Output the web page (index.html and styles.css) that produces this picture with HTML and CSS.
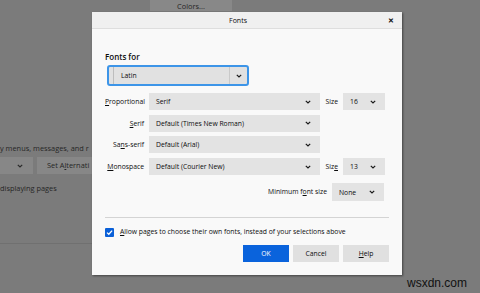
FILE: index.html
```html
<!DOCTYPE html>
<html lang="en">
<head>
    <title>Fonts</title>
    <meta charset="UTF-8">
    <link rel="stylesheet" href="styles.css">
</head>
<body>
    <!-- page behind the modal -->
    <div class="page">
        <div class="bg-colors">Colors...</div>
        <p class="bg-text bg-lang">y menus, messages, and r</p>
        <div class="bg-row">
            <div class="bg-select">
                <svg class="chev" width="6" height="4" viewBox="0 0 6 4"><path d="M0.8 0.8 L3 3 L5.2 0.8" /></svg>
            </div>
            <div class="bg-button">Set A<u>l</u>ternati</div>
        </div>
        <p class="bg-text bg-display">displaying pages</p>
        <div class="bg-line"></div>
    </div>

    <div class="dialog">
        <div class="titlebar">
            <span class="title">Fonts</span>
            <span class="close">&#x2715;</span>
        </div>
        <div class="dialog-body">
            <div class="heading">Fonts for</div>
            <div class="lang-select">
                <span class="lang-value">Latin</span>
                <span class="lang-arrow">
                    <svg class="chev" width="6" height="4" viewBox="0 0 6 4"><path d="M0.8 0.8 L3 3 L5.2 0.8" /></svg>
                </span>
            </div>

            <div class="font-grid">
                <div class="label"><u>P</u>roportional</div>
                <div class="select"><span>Serif</span><svg class="chev" width="6" height="4" viewBox="0 0 6 4"><path d="M0.8 0.8 L3 3 L5.2 0.8" /></svg></div>
                <div class="label">Size</div>
                <div class="select"><span>16</span><svg class="chev" width="6" height="4" viewBox="0 0 6 4"><path d="M0.8 0.8 L3 3 L5.2 0.8" /></svg></div>

                <div class="label"><u>S</u>erif</div>
                <div class="select"><span>Default (Times New Roman)</span><svg class="chev" width="6" height="4" viewBox="0 0 6 4"><path d="M0.8 0.8 L3 3 L5.2 0.8" /></svg></div>
                <div></div><div></div>

                <div class="label">Sa<u>n</u>s-serif</div>
                <div class="select"><span>Default (Arial)</span><svg class="chev" width="6" height="4" viewBox="0 0 6 4"><path d="M0.8 0.8 L3 3 L5.2 0.8" /></svg></div>
                <div></div><div></div>

                <div class="label"><u>M</u>onospace</div>
                <div class="select"><span>Default (Courier New)</span><svg class="chev" width="6" height="4" viewBox="0 0 6 4"><path d="M0.8 0.8 L3 3 L5.2 0.8" /></svg></div>
                <div class="label">Siz<u>e</u></div>
                <div class="select"><span>13</span><svg class="chev" width="6" height="4" viewBox="0 0 6 4"><path d="M0.8 0.8 L3 3 L5.2 0.8" /></svg></div>
            </div>

            <div class="min-row">
                <div class="label">Minimum f<u>o</u>nt size</div>
                <div class="select min-select"><span>None</span><svg class="chev" width="6" height="4" viewBox="0 0 6 4"><path d="M0.8 0.8 L3 3 L5.2 0.8" /></svg></div>
            </div>

            <div class="separator"></div>

            <div class="check-row">
                <span class="checkbox">
                    <svg width="9" height="9" viewBox="0 0 9 9"><path d="M2 4.6 L3.8 6.3 L7.1 2.6" /></svg>
                </span>
                <span><u>A</u>llow pages to choose their own fonts, instead of your selections above</span>
            </div>

            <div class="buttons">
                <div class="btn primary">OK</div>
                <div class="btn">Cancel</div>
                <div class="btn"><u>H</u>elp</div>
            </div>
        </div>
    </div>

    <div class="mark">wsxdn.com</div>
</body>
</html>
```

FILE: styles.css
```css
body {
    margin: 0;
    width: 480px;
    height: 293px;
    overflow: hidden;
    position: relative;
    background-color: #7b7b7b;
    font-family: "Open Sans", "Noto Sans", sans-serif;
    font-size: 6.8px;
    color: #0c0c0d;
}

u {
    text-decoration-thickness: 0.5px;
    text-underline-offset: 1px;
}

/****** PAGE BEHIND THE MODAL ******/
.page {
    color: #262626;
    width: 92px;
}
.bg-colors {
    margin-left: 150px;
    margin-top: -6px;
    width: 82px;
    height: 17px;
    line-height: 25px;
    text-align: center;
    background-color: #888888;
    font-size: 7.4px;
}
.bg-text {
    margin: 0;
    line-height: 10px;
    font-size: 7.4px;
    white-space: nowrap;
    overflow: hidden;
}
.bg-lang {
    margin-top: 132px;
}
.bg-row {
    display: flex;
    gap: 4px;
    margin-top: 4px;
    height: 17px;
}
.bg-select {
    width: 33px;
    flex-shrink: 0;
    background-color: #878787;
    display: flex;
    align-items: center;
    padding-left: 17px;
    box-sizing: border-box;
}
.bg-select .chev {
    stroke: #2a2a2a;
}
.bg-button {
    flex: 1;
    background-color: #878787;
    line-height: 17px;
    padding-left: 10px;
    font-size: 7.4px;
    white-space: nowrap;
    overflow: hidden;
}
.bg-display {
    margin-top: 9px;
}
.bg-line {
    margin-top: 50px;
    width: 92px;
    height: 1px;
    background-color: #707070;
}

/****** MODAL ******/
.dialog {
    position: absolute;
    left: 92px;
    top: 12px;
    width: 310px;
    height: 263px;
    background-color: #f9f9f9;
    box-shadow: 1px 1px 2px rgba(0, 0, 0, 0.45);
}
.titlebar {
    position: relative;
    height: 16px;
    background-color: #f0f0f0;
    border-bottom: 1px solid #dedede;
    text-align: center;
    line-height: 17px;
    font-size: 7px;
}
.title {
    display: inline-block;
    margin-right: 18px;
}
.close {
    position: absolute;
    right: 8px;
    top: 0;
    font-size: 7px;
    font-weight: 700;
}
.dialog-body {
    padding: 22px 13px 0 13px;
}
.heading {
    font-size: 8px;
    font-weight: 600;
    line-height: 12px;
}
.lang-select {
    display: flex;
    margin-top: 2px;
    margin-left: 2px;
    width: 142px;
    height: 21px;
    box-sizing: border-box;
    border: 2px solid #3d95e8;
    border-radius: 3px;
    background-color: #e1e1e1;
}
.lang-value {
    flex: 1;
    line-height: 17px;
    padding-left: 7px;
    border-left: 1px solid #bdbdbd;
    margin-left: 4px;
}
.lang-arrow {
    width: 17px;
    display: flex;
    align-items: center;
    justify-content: center;
    border-left: 1px solid #c9c9c9;
}

.chev {
    display: block;
    fill: none;
    stroke: #1a1a1a;
    stroke-width: 1.2;
}

.font-grid {
    display: grid;
    grid-template-columns: 39px 171px 13px 42px;
    grid-auto-rows: 17px;
    column-gap: 5px;
    row-gap: 4.7px;
    margin-top: 7px;
}
.label {
    text-align: right;
    line-height: 17px;
    white-space: nowrap;
}
.select {
    display: flex;
    align-items: center;
    justify-content: space-between;
    background-color: #e3e3e3;
    padding: 0 9px 0 7px;
    line-height: 17px;
}

.min-row {
    display: flex;
    justify-content: flex-end;
    gap: 5px;
    margin-top: 8px;
    padding-right: 5px;
    height: 18px;
}
.min-select {
    width: 52px;
    box-sizing: border-box;
}

.separator {
    margin-top: 16px;
    height: 1px;
    background-color: #d4d4d4;
}

.check-row {
    display: flex;
    align-items: center;
    gap: 6px;
    margin-top: 9px;
    line-height: 10px;
}
.checkbox {
    display: block;
    width: 9px;
    height: 9px;
    border-radius: 1px;
    background-color: #0a60d8;
}
.checkbox svg {
    display: block;
    fill: none;
    stroke: #ffffff;
    stroke-width: 1.3;
}

.buttons {
    display: flex;
    justify-content: flex-end;
    gap: 4px;
    margin-top: 8px;
}
.btn {
    width: 46px;
    height: 17px;
    line-height: 17px;
    text-align: center;
    background-color: #e0e0e0;
}
.btn.primary {
    background-color: #0a63dc;
    color: #ffffff;
}

/* watermark of the source site */
.mark {
    position: absolute;
    left: 407px;
    top: 276px;
    font-family: "Liberation Sans", Arial, sans-serif;
    font-size: 12px;
    color: #111111;
}
```
